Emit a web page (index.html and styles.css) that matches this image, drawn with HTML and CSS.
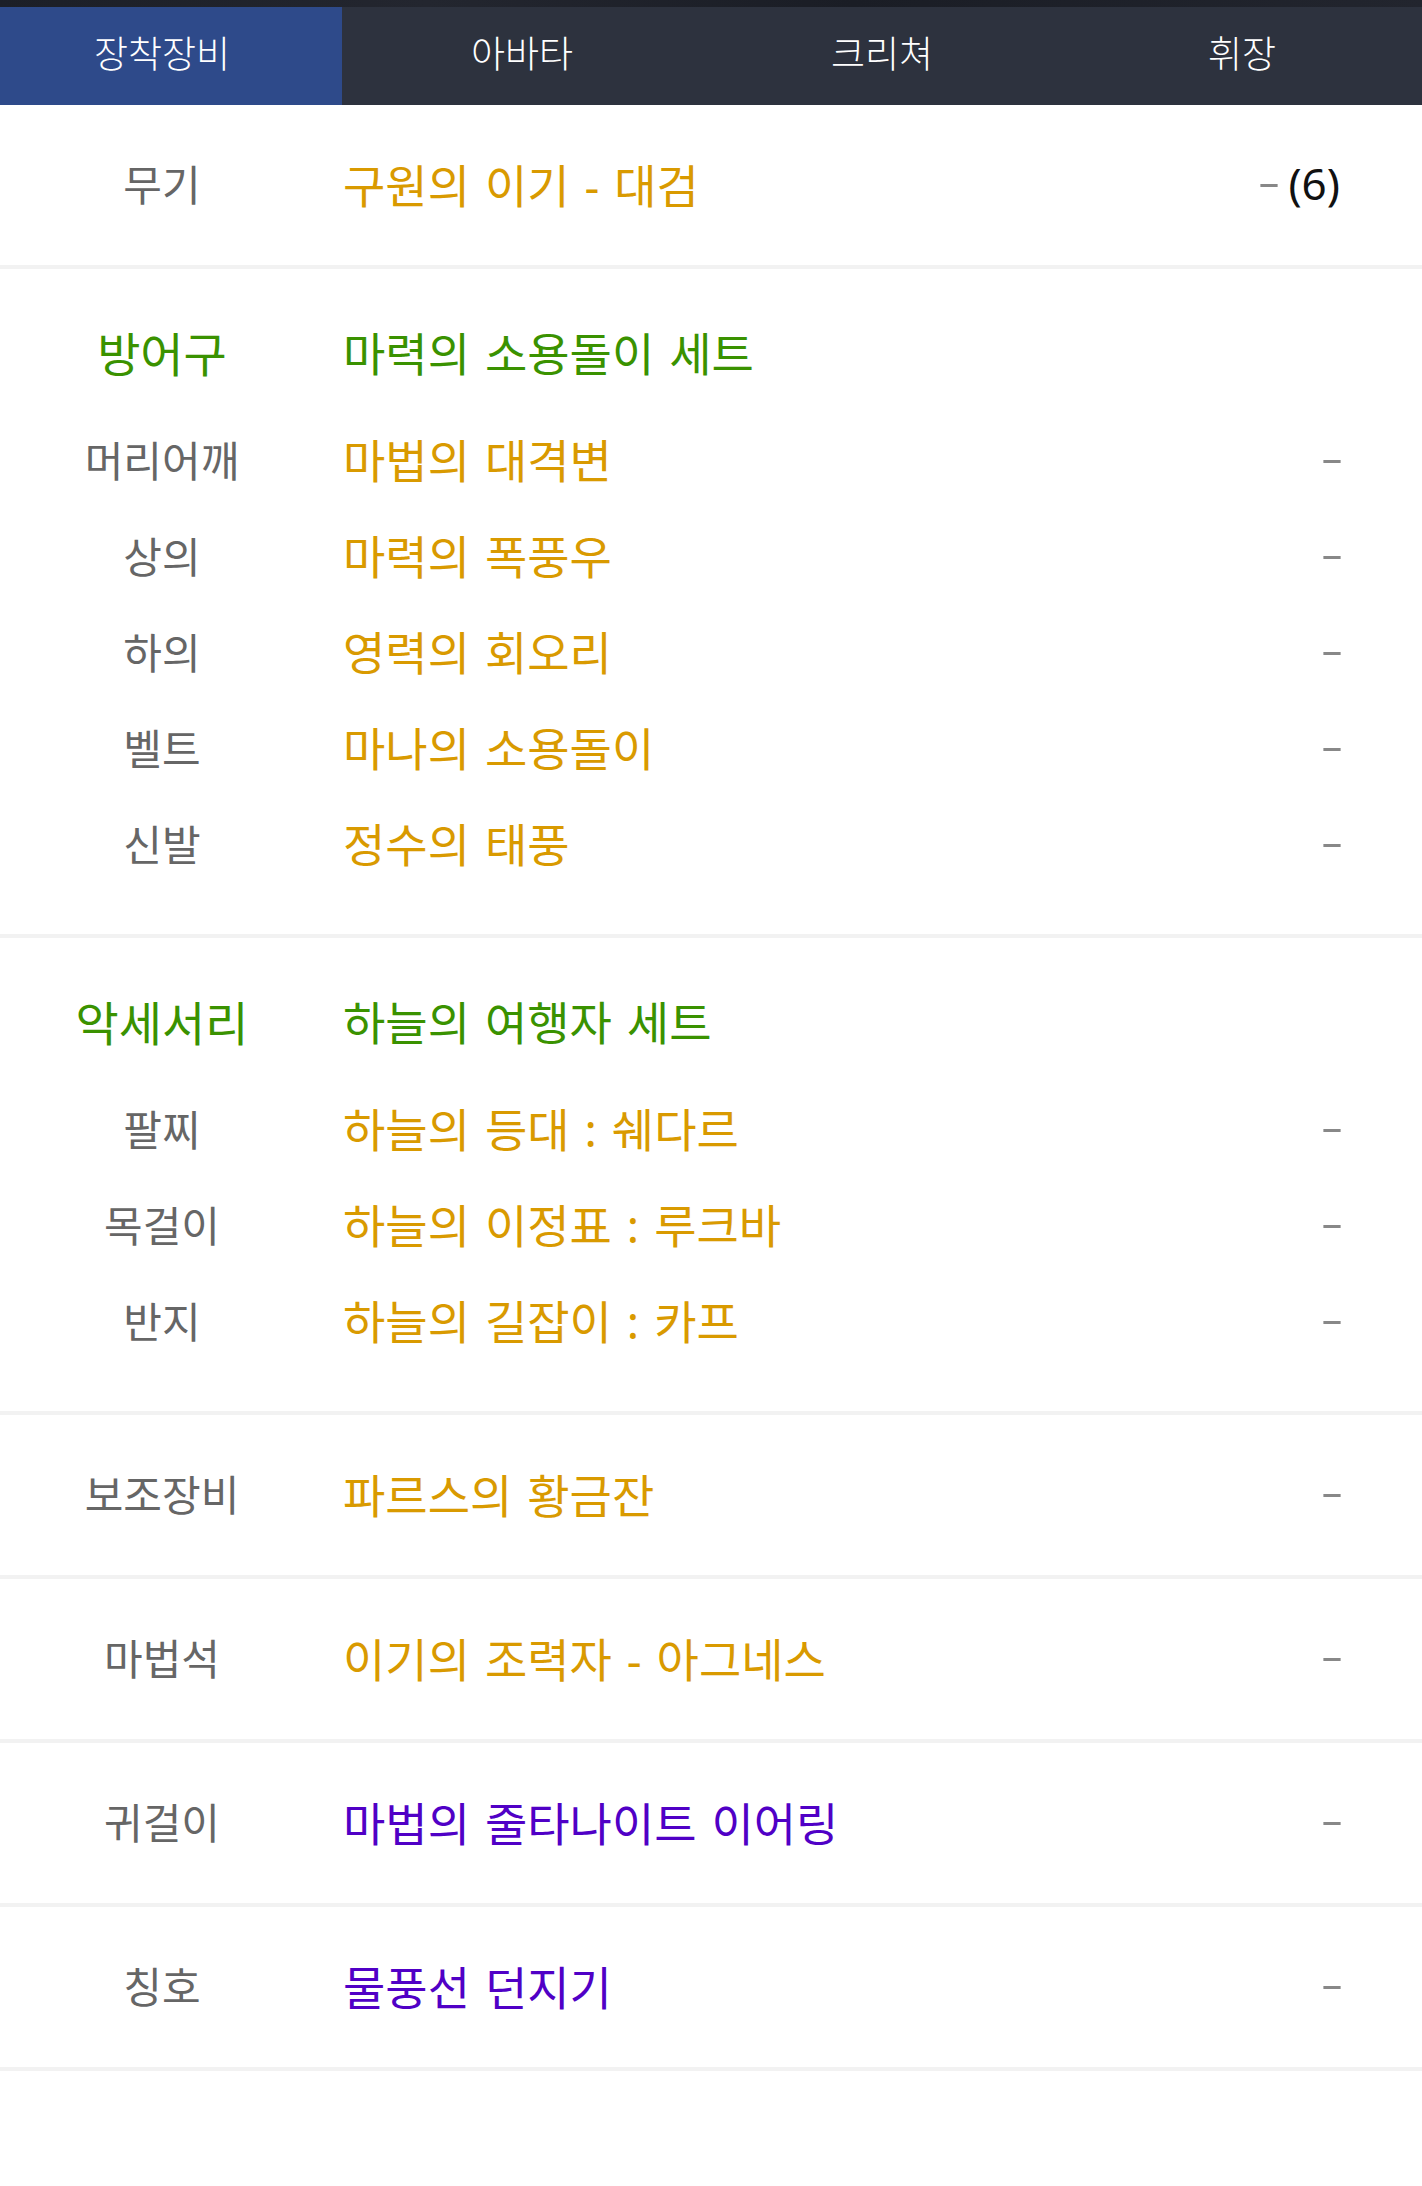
FILE: index.html
```html
<!DOCTYPE html>
<html lang="ko">
<head>
<meta charset="utf-8">
<title>장착장비</title>
<link rel="stylesheet" href="styles.css">
</head>
<body>
<div class="topstrip"></div>
<nav class="tabs">
  <div class="tab active">장착장비</div>
  <div class="tab">아바타</div>
  <div class="tab">크리쳐</div>
  <div class="tab">휘장</div>
</nav>
<main class="list">
  <section class="block single">
    <div class="row">
      <span class="label">무기</span>
      <span class="value orange">구원의 이기 - 대검</span>
      <span class="extra"><span class="dash">-</span><span class="count">(6)</span></span>
    </div>
  </section>

  <section class="block group">
    <div class="row head">
      <span class="label green">방어구</span>
      <span class="value green">마력의 소용돌이 세트</span>
      <span class="extra"></span>
    </div>
    <div class="row">
      <span class="label">머리어깨</span>
      <span class="value orange">마법의 대격변</span>
      <span class="extra"><span class="dash">-</span></span>
    </div>
    <div class="row">
      <span class="label">상의</span>
      <span class="value orange">마력의 폭풍우</span>
      <span class="extra"><span class="dash">-</span></span>
    </div>
    <div class="row">
      <span class="label">하의</span>
      <span class="value orange">영력의 회오리</span>
      <span class="extra"><span class="dash">-</span></span>
    </div>
    <div class="row">
      <span class="label">벨트</span>
      <span class="value orange">마나의 소용돌이</span>
      <span class="extra"><span class="dash">-</span></span>
    </div>
    <div class="row">
      <span class="label">신발</span>
      <span class="value orange">정수의 태풍</span>
      <span class="extra"><span class="dash">-</span></span>
    </div>
  </section>

  <section class="block group">
    <div class="row head">
      <span class="label green">악세서리</span>
      <span class="value green">하늘의 여행자 세트</span>
      <span class="extra"></span>
    </div>
    <div class="row">
      <span class="label">팔찌</span>
      <span class="value orange">하늘의 등대 : 쉐다르</span>
      <span class="extra"><span class="dash">-</span></span>
    </div>
    <div class="row">
      <span class="label">목걸이</span>
      <span class="value orange">하늘의 이정표 : 루크바</span>
      <span class="extra"><span class="dash">-</span></span>
    </div>
    <div class="row">
      <span class="label">반지</span>
      <span class="value orange">하늘의 길잡이 : 카프</span>
      <span class="extra"><span class="dash">-</span></span>
    </div>
  </section>

  <section class="block single">
    <div class="row">
      <span class="label">보조장비</span>
      <span class="value orange">파르스의 황금잔</span>
      <span class="extra"><span class="dash">-</span></span>
    </div>
  </section>

  <section class="block single">
    <div class="row">
      <span class="label">마법석</span>
      <span class="value orange">이기의 조력자 - 아그네스</span>
      <span class="extra"><span class="dash">-</span></span>
    </div>
  </section>

  <section class="block single">
    <div class="row">
      <span class="label">귀걸이</span>
      <span class="value purple">마법의 줄타나이트 이어링</span>
      <span class="extra"><span class="dash">-</span></span>
    </div>
  </section>

  <section class="block single">
    <div class="row">
      <span class="label">칭호</span>
      <span class="value purple">물풍선 던지기</span>
      <span class="extra"><span class="dash">-</span></span>
    </div>
  </section>
</main>
</body>
</html>
```

FILE: styles.css
```css
html, body {
  margin: 0;
  padding: 0;
  background: #ffffff;
}

body {
  font-family: "Noto Sans CJK KR", "Noto Sans", sans-serif;
  width: 1422px;
  overflow: hidden;
}

.topstrip {
  height: 7px;
  background: linear-gradient(90deg, #1c1f27 0%, #23262f 30%, #1a1d25 60%, #22252e 100%);
}

.tabs {
  display: flex;
  height: 98px;
  background: #2d323e;
  margin-left: -18px;
  width: 1440px;
}

.tab {
  flex: 0 0 360px;
  display: flex;
  align-items: center;
  justify-content: center;
  color: #ffffff;
  font-size: 37px;
  font-weight: 300;
  padding-bottom: 9px;
  box-sizing: border-box;
}

.tab.active {
  background: #2e4a8a;
}

.block {
  border-bottom: 4px solid #f2f2f2;
}

.block.single {
  padding: 32px 0;
}

.block.group {
  padding: 38px 0 40px;
}

.row {
  display: flex;
  align-items: center;
  height: 96px;
  padding-bottom: 8px;
  box-sizing: border-box;
}

.block.single .row {
  padding-bottom: 5px;
}

.row.head {
  margin-bottom: 11px;
}

.label {
  flex: 0 0 324px;
  text-align: center;
  font-size: 42px;
  color: #666666;
}

.label.green {
  font-size: 47px;
}

.value {
  flex: 1 1 auto;
  margin-left: 19px;
  font-family: "Noto Sans", "Noto Sans CJK KR", sans-serif;
  font-size: 46px;
  word-spacing: 3px;
}

.extra {
  flex: 0 0 auto;
  padding-right: 82px;
  display: flex;
  align-items: center;
}

.dash {
  display: inline-block;
  color: #888888;
  font-size: 42px;
  transform: scaleX(1.6);
  transform-origin: right center;
  margin-right: -4px;
}

.count {
  color: #111111;
  font-family: "Noto Sans", sans-serif;
  font-size: 44px;
  margin-left: 12px;
}

.orange { color: #d99a00; }
.green { color: #3a9200; }
.purple { color: #5000c6; }
```
